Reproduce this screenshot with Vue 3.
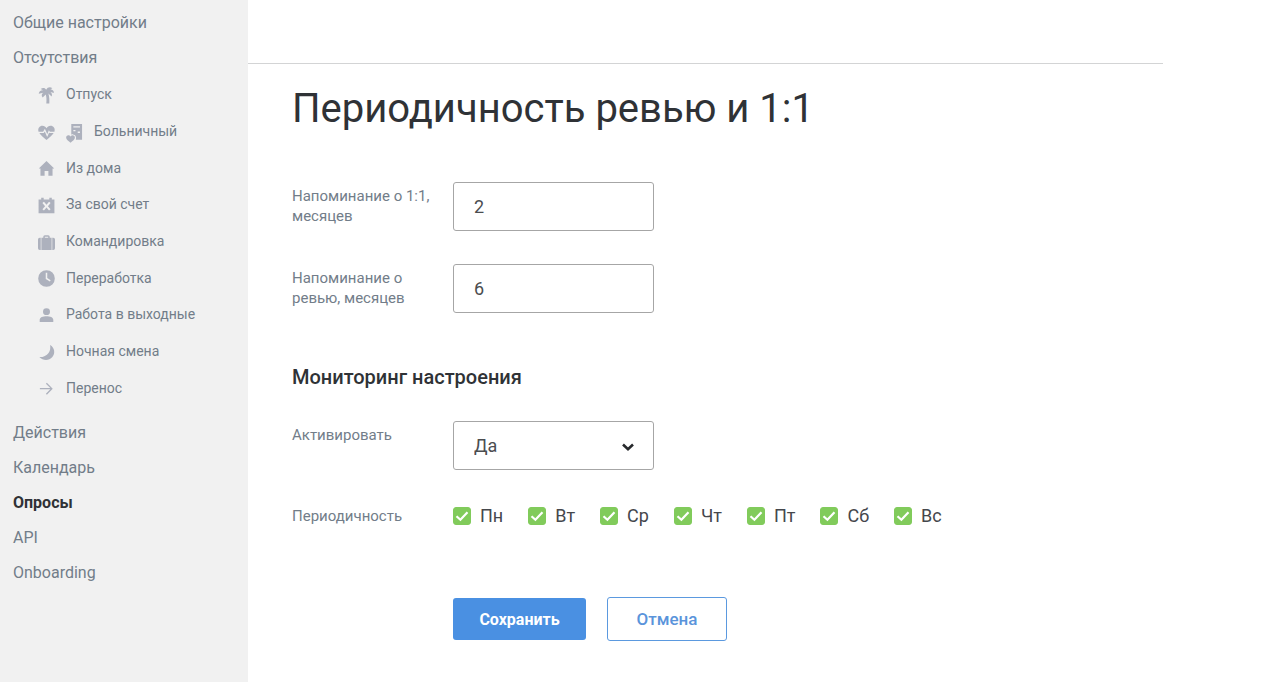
<template>
  <div class="page">
    <nav class="sidebar">
      <a v-for="item in topMenu" :key="item" class="menu-item" href="#">{{ item }}</a>
      <div class="submenu">
        <a v-for="item in absences" :key="item.name" class="submenu-item" href="#">
          <svg v-for="icon in item.icons" :key="icon" class="icon" viewBox="0 0 18 18" aria-hidden="true">
            <path :d="icons[icon]" fill-rule="evenodd" />
          </svg>
          <span>{{ item.name }}</span>
        </a>
      </div>
      <a
        v-for="item in bottomMenu"
        :key="item"
        class="menu-item"
        :class="{ active: item === current }"
        href="#"
      >{{ item }}</a>
    </nav>

    <main class="main">
      <header class="topbar"></header>
      <form class="content" @submit.prevent>
        <h1>Периодичность ревью и 1:1</h1>

        <div class="row">
          <label class="label" for="meeting">Напоминание о 1:1, месяцев</label>
          <input id="meeting" v-model="meeting" class="field" type="text" inputmode="numeric">
        </div>
        <div class="row">
          <label class="label" for="review">Напоминание о ревью, месяцев</label>
          <input id="review" v-model="review" class="field" type="text" inputmode="numeric">
        </div>

        <h2>Мониторинг настроения</h2>

        <div class="row">
          <label class="label" for="enabled">Активировать</label>
          <div class="select">
            <select id="enabled" v-model="enabled" class="field">
              <option>Да</option>
              <option>Нет</option>
            </select>
            <svg class="chevron" viewBox="0 0 14 10" aria-hidden="true">
              <path d="M2 2.5 L7 7.2 L12 2.5" />
            </svg>
          </div>
        </div>

        <div class="row days-row" role="group" aria-labelledby="period">
          <span id="period" class="label">Периодичность</span>
          <div class="days">
            <label v-for="day in days" :key="day.name" class="day">
              <span class="check">
                <input v-model="day.checked" type="checkbox">
                <svg v-if="day.checked" viewBox="0 0 18 18" aria-hidden="true">
                  <path d="M3.5 9.2 L7.4 12.8 L14.5 5.2" />
                </svg>
              </span>
              {{ day.name }}
            </label>
          </div>
        </div>

        <div class="buttons">
          <button class="save" type="submit">Сохранить</button>
          <button class="cancel" type="button">Отмена</button>
        </div>
      </form>
    </main>
  </div>
</template>

<script setup>
import { ref } from 'vue'

const topMenu = ['Общие настройки', 'Отсутствия']
const bottomMenu = ['Действия', 'Календарь', 'Опросы', 'API', 'Onboarding']
const current = 'Опросы'

const absences = [
  { name: 'Отпуск', icons: ['palm'] },
  { name: 'Больничный', icons: ['heart', 'sheet'] },
  { name: 'Из дома', icons: ['home'] },
  { name: 'За свой счет', icons: ['calendar'] },
  { name: 'Командировка', icons: ['case'] },
  { name: 'Переработка', icons: ['clock'] },
  { name: 'Работа в выходные', icons: ['person'] },
  { name: 'Ночная смена', icons: ['moon'] },
  { name: 'Перенос', icons: ['arrow'] }
]

const icons = {
  palm: 'M8.6 3 C10 .2 13 -.4 15.2 1.4 L13.2 2.4 C15.6 2.6 17 4.2 16.8 6.4 L13.2 5.2 C14.8 6.4 15.2 8.2 14.4 10 L11 6.8 C12 10 12.2 13.4 12 17.4 H8.8 C9.2 13.6 9 10.6 8.2 8 L5 11 C3.4 9.6 3.6 7.6 5.6 6.2 L.8 7.2 C.8 4.8 2.8 3.2 5.4 3.4 L2.8 2.2 C5 .4 7.6 .8 8.6 3 Z',
  heart: 'M.6 8.2 C-.6 4.4 1.8 1.8 4.7 1.8 C6.6 1.8 8.1 2.8 9 4.4 C9.9 2.8 11.4 1.8 13.3 1.8 C16.2 1.8 18.6 4.4 17.4 8.2 H12.6 L11.5 6.7 L9.8 10.8 L7.3 5 L5.4 8.2 Z M1.4 9.6 H6.1 L7.2 7.9 L9.7 13.7 L11.8 8.9 L12.1 9.6 H16.6 C15 12.3 12 14.6 9 17 C6 14.6 3 12.3 1.4 9.6 Z',
  sheet: 'M5.6 0 H17 V16.6 H10.4 C11.4 13.6 10 11.4 7.4 11 C6.7 10.9 6.1 11.1 5.6 11.4 Z M7.8 2.4 V3.8 H14.8 V2.4 Z M7.8 6.4 V7.8 H10 V6.4 Z M12.4 8 V9.4 H14.8 V8 Z M4.8 13.3 C6.4 10.9 9.8 12.1 9.4 14.9 C9.1 16.8 6.7 18.2 4.8 19.8 C2.9 18.2 .5 16.8 .2 14.9 C-.2 12.1 3.2 10.9 4.8 13.3 Z',
  home: 'M9 1 L17.2 9 H15.4 V16.8 H11 V11.6 H7 V16.8 H2.6 V9 H.8 Z',
  calendar: 'M.6 2.6 H3.4 V.8 H6 V2.6 H12 V.8 H14.6 V2.6 H17.4 V17.2 H.6 Z M4.7 6.4 L7.5 9.7 L4.7 13 L6.3 14.4 L9 11.2 L11.7 14.4 L13.3 13 L10.5 9.7 L13.3 6.4 L11.7 5.1 L9 8.2 L6.3 5.1 Z',
  case: 'M5.6 4 V3 Q5.6 1.2 7.3 1.2 H10.7 Q12.4 1.2 12.4 3 V4 H14.4 V17 H3.6 V4 Z M7.2 4 H10.8 V2.8 H7.2 Z M2.9 4 V17 H1.8 Q0 17 0 15.2 V5.8 Q0 4 1.8 4 Z M15.1 4 H16.2 Q18 4 18 5.8 V15.2 Q18 17 16.2 17 H15.1 Z',
  clock: 'M9 .2 A8.8 8.8 0 1 1 9 17.8 A8.8 8.8 0 1 1 9 .2 Z M8.2 3 V9.5 L12.6 12.1 L13.4 10.8 L9.8 8.6 V3 Z',
  person: 'M9 1.2 A3.7 3.7 0 1 1 9 8.6 A3.7 3.7 0 1 1 9 1.2 Z M1.8 15.8 V13.6 C1.8 11 5.4 9.8 9 9.8 C12.6 9.8 16.2 11 16.2 13.6 V15.8 Z',
  moon: 'M12.8 1 C17.6 3.8 18.6 9.6 15.2 13.8 C11.8 18 5.4 18.2 1.4 13.8 C5.4 14 9 12.4 11.2 9.4 C12.9 7 13.4 4 12.8 1 Z',
  arrow: 'M2 8.5 H13 L8.4 3.9 L9.4 2.9 L15.6 9.2 L9.4 15.5 L8.4 14.5 L13 9.9 H2 Z'
}

const meeting = ref('2')
const review = ref('6')
const enabled = ref('Да')
const days = ref(['Пн', 'Вт', 'Ср', 'Чт', 'Пт', 'Сб', 'Вс'].map(name => ({ name, checked: true })))
</script>

<style>
body {
  margin: 0;
  background: #fff;
}
</style>

<style scoped>
.page {
  display: flex;
  min-height: calc(100vh - 4px);
  font-family: Roboto, "Noto Sans", sans-serif;
  color: #2f3236;
}
.page * {
  box-sizing: border-box;
}

/* sidebar */
.sidebar {
  width: 248px;
  flex-shrink: 0;
  padding-top: 5px;
  background: #f1f1f1;
}
.menu-item {
  display: block;
  padding-left: 13px;
  font-size: 16px;
  line-height: 35px;
  color: #727d89;
  text-decoration: none;
}
.menu-item.active {
  font-weight: 700;
  color: #303236;
}
.submenu {
  display: flex;
  flex-direction: column;
  height: 340px;
  padding: 1px 0 9px 38px;
}
.submenu-item {
  display: flex;
  flex: 1;
  align-items: center;
  gap: 11px;
  font-size: 14px;
  color: #727d89;
  text-decoration: none;
}
.icon {
  width: 17px;
  height: 17px;
  margin-top: 2px;
  overflow: visible;
  fill: #adb1bd;
}

/* content */
.main {
  flex: 1;
  margin-right: 117px;
}
.topbar {
  height: 64px;
  border-bottom: 1px solid #d3d4d5;
}
.content {
  padding: 20px 0 0 44px;
}
h1 {
  margin: 0 0 48px;
  font-size: 40px;
  line-height: 50px;
  font-weight: 400;
}
h2 {
  margin: 0 0 32px;
  padding-top: 19px;
  font-size: 20px;
  line-height: 24px;
  font-weight: 500;
}
.row {
  display: flex;
  align-items: flex-start;
  margin-bottom: 33px;
}
.label {
  width: 161px;
  flex-shrink: 0;
  padding: 4px 16px 0 0;
  font-size: 15px;
  line-height: 20px;
  color: #727d89;
}
.field {
  width: 201px;
  height: 49px;
  padding: 0 20px;
  border: 1px solid #a6a6a6;
  border-radius: 3px;
  background: #fff;
  font-family: inherit;
  font-size: 18px;
  color: #4b4d50;
}
.select {
  position: relative;
}
select.field {
  display: block;
  appearance: none;
}
.chevron {
  position: absolute;
  right: 19px;
  top: 21px;
  width: 14px;
  height: 10px;
  fill: none;
  stroke: #27292c;
  stroke-width: 2.6;
  pointer-events: none;
}
.days-row .label {
  padding-top: 3px;
}
.days {
  display: flex;
  gap: 25px;
}
.day {
  display: flex;
  align-items: center;
  gap: 9px;
  font-size: 18px;
  line-height: 26px;
  color: #45474c;
}
.check {
  position: relative;
  width: 18px;
  height: 18px;
}
.check input {
  display: block;
  appearance: none;
  width: 18px;
  height: 18px;
  margin: 0;
  border: 1px solid #a6a6a6;
  border-radius: 3px;
}
.check input:checked {
  border-color: #81cb5b;
  background: #81cb5b;
}
.check svg {
  position: absolute;
  inset: 0;
  fill: none;
  stroke: #fff;
  stroke-width: 2.2;
  pointer-events: none;
}
.buttons {
  display: flex;
  align-items: center;
  gap: 21px;
  padding: 35px 0 0 161px;
}
.buttons button {
  font-family: inherit;
  border-radius: 3px;
  cursor: pointer;
}
.save {
  width: 133px;
  height: 42px;
  padding: 0;
  border: 0;
  background: #4a90e2;
  color: #fff;
  font-size: 16px;
  font-weight: 700;
}
.cancel {
  width: 120px;
  height: 44px;
  padding: 0;
  border: 1px solid #5b99df;
  background: #fff;
  color: #5a94db;
  font-size: 17px;
  font-weight: 500;
}
</style>
